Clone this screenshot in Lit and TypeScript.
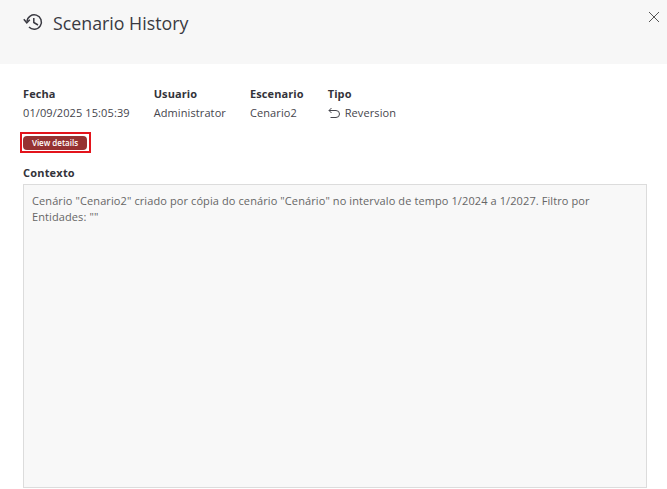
import { LitElement, html, css } from "lit";
import { customElement } from "lit/decorators.js";

@customElement("app-root")
export class AppRoot extends LitElement {
  static styles = css`
    :host {
      display: block;
      width: 667px;
      height: 489px;
      overflow: hidden;
      background: #fff;
      font-family: "Open Sans", sans-serif;
      color: #3f3f46;
      position: relative;
    }
    .header {
      height: 64px;
      box-sizing: border-box;
      background: #f7f7f7;
      display: flex;
      align-items: flex-start;
      padding: 11px 0 0 23px;
      gap: 10px;
    }
    .header svg { margin-top: 2px; }
    .title { font-size: 17.8px; line-height: 24px; color: #3a3a42; }
    .close {
      position: absolute;
      top: 11px;
      right: 7.5px;
      width: 12px;
      height: 12px;
    }
    .body { padding: 22px 20px 0 23px; }
    .meta { display: flex; gap: 24px; }
    .col { display: flex; flex-direction: column; }
    .label { font-size: 11px; font-weight: 700; line-height: 16px; color: #33333a; letter-spacing: 0.1px; }
    .value { font-size: 11px; line-height: 16px; margin-top: 3px; display: flex; align-items: center; gap: 5px; color: #45454c; letter-spacing: 0.1px; }
    .highlight {
      display: inline-flex;
      margin: 11px 0 0 -3px;
      border: 2px solid #e3141c;
      padding: 1.5px 2px 1.5px 1px;
    }
    .btn {
      background: #963232;
      color: #fff;
      font-size: 8px;
      font-weight: 600;
      line-height: 14px;
      height: 14px;
      width: 64px;
      text-align: center;
      border-radius: 4px;
      padding: 0;
      border: 0;
      font-family: inherit;
      display: block;
    }
    .ctx-label { font-size: 11px; font-weight: 700; line-height: 16px; margin-top: 12px; color: #33333a; letter-spacing: 0.2px; }
    .ctx {
      margin-top: 3px;
      height: 304px;
      width: 624px;
      box-sizing: border-box;
      border: 1px solid #dcdcdc;
      background: #f8f8f8;
      padding: 8px;
      font-size: 11px;
      line-height: 16px;
      color: #666;
      letter-spacing: 0.1px;
    }
  `;

  render() {
    return html`
      <div class="header">
        <svg width="20" height="20" viewBox="0 0 20 20" fill="none" stroke="#3a3a42" stroke-width="1.5">
          <path d="M4 8.5A7.2 7.2 0 1 1 6 14" />
          <path d="M0.8 6.2L3.8 9.8L6.8 6.8" />
          <path d="M10.8 5V9.5L15 12" />
        </svg>
        <div class="title">Scenario History</div>
      </div>
      <svg class="close" viewBox="0 0 12 12" stroke="#555" stroke-width="1" fill="none">
        <path d="M1 1L11 11M11 1L1 11" />
      </svg>
      <div class="body">
        <div class="meta">
          <div class="col"><span class="label">Fecha</span><span class="value">01/09/2025 15:05:39</span></div>
          <div class="col"><span class="label">Usuario</span><span class="value">Administrator</span></div>
          <div class="col"><span class="label">Escenario</span><span class="value">Cenario2</span></div>
          <div class="col">
            <span class="label">Tipo</span>
            <span class="value">
              <svg width="12" height="12" viewBox="0 0 12 12" fill="none" stroke="#45454c" stroke-width="1">
                <path d="M3.5 1L1 3.5L3.5 6" />
                <path d="M1 3.5H8A3.2 3.2 0 0 1 8 10.5H2.5" />
              </svg>
              Reversion
            </span>
          </div>
        </div>
        <div class="highlight"><button class="btn">View details</button></div>
        <div class="ctx-label">Contexto</div>
        <div class="ctx">Cenário "Cenario2" criado por cópia do cenário "Cenário" no intervalo de tempo 1/2024 a 1/2027. Filtro por Entidades: ""</div>
      </div>
    `;
  }
}
